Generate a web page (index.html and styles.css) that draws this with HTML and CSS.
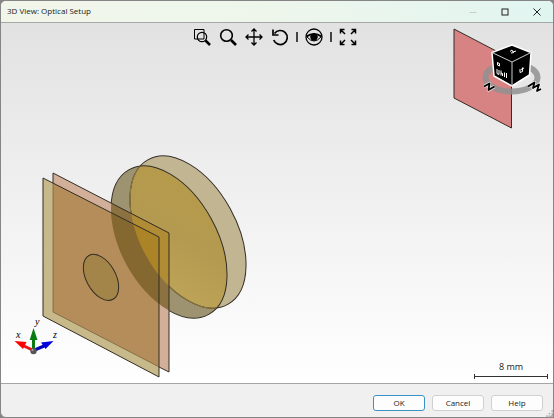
FILE: index.html
```html
<!DOCTYPE html>
<html lang="en">
<head>
<meta charset="utf-8">
<title>3D View: Optical Setup</title>
<link rel="stylesheet" href="styles.css">
</head>
<body>
<div class="window">
  <header class="titlebar">
    <h1 class="title">3D View: Optical Setup</h1>
    <div class="controls">
      <button class="control" type="button" aria-label="Minimize" disabled><svg viewBox="0 0 10 10"><path d="M1.500 5.500h7" stroke="#c3d0cc"/></svg></button>
      <button class="control" type="button" aria-label="Maximize"><svg viewBox="0 0 10 10"><rect x="2" y="2" width="6" height="6"/></svg></button>
      <button class="control" type="button" aria-label="Close"><svg viewBox="0 0 10 10"><path d="M1.500 1.500l7 7M8.500 1.500l-7 7"/></svg></button>
    </div>
  </header>

  <main class="viewport">
    <svg class="scene" viewBox="1 23 552 360" role="img" aria-label="Optical setup">
      <defs>
        <clipPath id="front-disc"><ellipse rx="82.600" ry="48.200" transform="translate(169 242) rotate(61.200)"/></clipPath>
        <clipPath id="pink-plane"><path d="M53 173L169 233V372L53 312z"/></clipPath>
        <clipPath id="olive-plane"><path d="M43 178L159 237V377L43 316z"/></clipPath>
        <linearGradient id="glass" x1="0" y1="0" x2="1" y2="1">
          <stop offset="0" stop-color="#b99b48"/><stop offset=".55" stop-color="#b39a50"/><stop offset="1" stop-color="#c1a75a"/>
        </linearGradient>
      </defs>

      <g class="edge">
        <path d="M454 29L511.500 59V128L454 98z" fill="#d78283"/>
      </g>

      <g>
        <ellipse rx="82.600" ry="48.200" transform="translate(188 232) rotate(61.200)" fill="#c2b592"/>
        <ellipse rx="82.600" ry="48.200" transform="translate(169 242) rotate(61.200)" fill="#9d9370"/>
        <g clip-path="url(#front-disc)"><ellipse rx="82.600" ry="48.200" transform="translate(188 232) rotate(61.200)" fill="url(#glass)"/></g>
        <g class="edge">
          <ellipse rx="82.600" ry="48.200" transform="translate(188 232) rotate(61.200)"/>
          <ellipse rx="82.600" ry="48.200" transform="translate(169 242) rotate(61.200)"/>
        </g>
        <g clip-path="url(#front-disc)"><ellipse class="hidden-edge" rx="82.600" ry="48.200" transform="translate(188 232) rotate(61.200)"/></g>
      </g>

      <path d="M53 173L169 233V372L53 312z" fill="#d2af98"/>
      <g clip-path="url(#pink-plane)">
        <ellipse rx="82.600" ry="48.200" transform="translate(169 242) rotate(61.200)" fill="#8c7240"/>
        <g clip-path="url(#front-disc)"><ellipse rx="82.600" ry="48.200" transform="translate(188 232) rotate(61.200)" fill="#b08c35"/></g>
      </g>
      <path d="M43 178L159 237V377L43 316z" fill="#c8b98a"/>
      <g clip-path="url(#olive-plane)">
        <path d="M53 173L169 233V372L53 312z" fill="#b58d5b"/>
        <g clip-path="url(#pink-plane)">
          <ellipse rx="82.600" ry="48.200" transform="translate(169 242) rotate(61.200)" fill="#846830"/>
          <g clip-path="url(#front-disc)"><ellipse rx="82.600" ry="48.200" transform="translate(188 232) rotate(61.200)" fill="#ac8428"/></g>
        </g>
        <path d="M53 173V312L169 372" fill="none" stroke="#75623c" stroke-width=".8"/>
      </g>
      <g class="edge">
        <path d="M53 183V173L169 233V372L159 367"/>
        <path d="M43 178L159 237V377L43 316z"/>
        <ellipse rx="25" ry="14.700" transform="translate(101 277.400) rotate(61.200)" fill="#a3854a"/>
      </g>

      <g class="axes">
        <path d="M33.500 350.500L24 346" stroke="#e11" stroke-width="3"/><path d="M14.500 341L26.500 342L23 349z" fill="#f00"/>
        <path d="M33.500 350.500L44 346" stroke="#00b" stroke-width="3"/><path d="M53.500 341L41 342.500L45.500 349z" fill="#00d"/>
        <path d="M33.500 350V338" stroke="#087a10" stroke-width="3"/><path d="M33.500 328L29.700 340H37.500z" fill="#087a10"/>
        <circle cx="33.500" cy="351" r="3.200" fill="#555"/><circle cx="32.500" cy="350" r="1" fill="#aaa"/>
        <text x="16" y="338">x</text><text x="35" y="325">y</text><text x="53" y="338">z</text>
      </g>

      <g class="cube">
        <ellipse cx="511.500" cy="77.500" rx="26" ry="14" fill="none" stroke="#919191" stroke-opacity=".85" stroke-width="6"/>
        <path d="M512 45L531 52.500L529.500 75L512 86L494 76L492 52.500z" fill="#000" stroke="#fff" stroke-width="1.500" stroke-linejoin="round"/>
        <path d="M492 52.500L512 62L531 52.500M512 62V86" fill="none" stroke="#ccc" stroke-width="1"/>
        <path d="M510 51.500l2-1.500l1 2l3-1M511 53l3-.5" fill="none" stroke="#fff" stroke-width="1"/>
        <path d="M497 62.500l2.500 1v2.500M497.500 63v2l2 1M497 69v4.500l2 1v-4.500M501 70.500v5M501 73l1.500 .5v2.500M504.500 72.500v4.500M506.500 73v5M520 69v3.500l2.500-1v-4M521 69.500l3-1.500" fill="none" stroke="#fff" stroke-width="1"/>
        <g fill="none" stroke-linejoin="round">
          <path d="M484 86.500L489.500 83.500L488.500 90L494.500 86.500" stroke="#fff" stroke-opacity=".7" stroke-width="3.500"/>
          <path d="M484 86.500L489.500 83.500L488.500 90L494.500 86.500" stroke="#000" stroke-width="1.800"/>
          <path d="M528 86.500L534.500 82.500L533 88L539 84.500L537 91L541 89" stroke="#fff" stroke-opacity=".7" stroke-width="3.500"/>
          <path d="M528 86.500L534.500 82.500L533 88L539 84.500L537 91L541 89" stroke="#000" stroke-width="1.800"/>
        </g>
      </g>
    </svg>

    <div class="toolbar" role="toolbar" aria-label="View tools">
      <button class="tool" type="button" aria-label="Zoom to area"><svg viewBox="0 0 20 20"><path d="M12 2.500H2.500V12H12z" stroke-width="1"/><circle cx="10" cy="10" r="4.700" stroke-width="1.200"/><path d="M13.500 13.500L18 18" stroke-width="2.500"/></svg></button>
      <button class="tool" type="button" aria-label="Zoom"><svg viewBox="0 0 20 20"><circle cx="8.500" cy="8.500" r="5.800" stroke-width="1.600"/><path d="M13 13L18 18" stroke-width="2.700"/></svg></button>
      <button class="tool" type="button" aria-label="Pan"><svg viewBox="0 0 20 20"><path d="M10 2V18M2 10H18M7.500 4.500L10 2L12.500 4.500M7.500 15.500L10 18L12.500 15.500M4.500 7.500L2 10L4.500 12.500M15.500 7.500L18 10L15.500 12.500" stroke-width="1.300"/></svg></button>
      <button class="tool" type="button" aria-label="Rotate"><svg viewBox="0 0 20 20"><path d="M4.500 6.500A7 7 0 1 1 3.700 13" stroke-width="1.700"/><path d="M3 2.500V8H8.500" stroke-width="1.700"/></svg></button>
      <span class="divider"></span>
      <button class="tool" type="button" aria-label="View options"><svg viewBox="0 0 20 20"><circle cx="10" cy="10" r="8" stroke-width="1.300"/><path d="M2.500 9.500Q10 4.500 17.500 9.500" stroke-width="2"/><path d="M3 10Q10 18 17 10" stroke-width="1"/><circle cx="10" cy="10" r="3.300" fill="#000"/></svg></button>
      <span class="divider"></span>
      <button class="tool" type="button" aria-label="Fit to window"><svg viewBox="0 0 20 20"><path d="M2.500 6.500V2.500H6.500M2.500 2.500L7 7M13.500 2.500H17.500V6.500M17.500 2.500L13 7M2.500 13.500V17.500H6.500M2.500 17.500L7 13M13.500 17.500H17.500V13.500M17.500 17.500L13 13" stroke-width="1.500"/></svg></button>
    </div>

    <div class="scale">
      <span>8 mm</span>
      <span class="ruler"></span>
    </div>
  </main>

  <footer class="footer">
    <button class="button primary" type="button">OK</button>
    <button class="button" type="button">Cancel</button>
    <button class="button" type="button">Help</button>
    <svg class="grip" viewBox="0 0 8 8"><path d="M6 0h2v2H6zM3 3h2v2H3zM6 3h2v2H6zM0 6h2v2H0zM3 6h2v2H3zM6 6h2v2H6z"/></svg>
  </footer>
</div>
</body>
</html>
```
FILE: styles.css
```css
* {
  box-sizing: border-box;
}

body {
  margin: 0;
  background: #858585;
  color: #222;
  font-family: "Open Sans", "Noto Sans", sans-serif;
}

button {
  padding: 0;
  border: 0;
  background: none;
  color: inherit;
  font: inherit;
}

.window {
  display: flex;
  flex-direction: column;
  height: 100vh;
  border: 1px solid #858585;
  border-radius: 6px;
  overflow: hidden;
  background: #f0f0f0;
}

.titlebar {
  display: flex;
  justify-content: space-between;
  flex: none;
  height: 22px;
  padding-left: 6px;
  border-bottom: 1px solid #a5a9a5;
  background: linear-gradient(90deg, #f1f6ea, #eef6ec 50%, #e1f5f0);
}

.title {
  margin: 0;
  font-size: 8px;
  font-weight: 400;
  line-height: 20px;
}

.controls {
  display: flex;
}

.control {
  display: grid;
  place-items: center;
  width: 32px;
}

.control svg {
  width: 10px;
  height: 10px;
  fill: none;
  stroke: #222;
}

.viewport {
  display: grid;
  flex: 1;
  min-height: 0;
  background: linear-gradient(#e2e2e2, #fff);
}

.viewport > * {
  grid-area: 1 / 1;
  min-height: 0;
}

.scene {
  width: 100%;
  height: 100%;
}

.edge {
  fill: none;
  stroke: #332d24;
  stroke-width: 1;
}

.hidden-edge {
  fill: none;
  stroke: #8e793f;
  stroke-width: 1;
}

.axes {
  font: italic 10px "Liberation Serif", serif;
}

.toolbar {
  display: flex;
  align-items: center;
  align-self: start;
  justify-self: center;
  gap: 6px;
  padding: 4px 4px 0 0;
}

.tool {
  display: grid;
  width: 20px;
  height: 20px;
}

.tool svg {
  width: 20px;
  height: 20px;
  fill: none;
  stroke: #000;
}

.divider {
  width: 2px;
  height: 10px;
  background: #444;
}

.scale {
  display: flex;
  flex-direction: column;
  place-self: end;
  width: 74px;
  margin: 0 5px 4px 0;
  font-size: 9px;
  line-height: 14px;
  text-align: center;
}

.ruler {
  height: 5px;
  border: solid #333;
  border-width: 0 1px;
  background: linear-gradient(#333, #333) center / 100% 1px no-repeat;
}

.footer {
  display: flex;
  align-items: center;
  justify-content: flex-end;
  flex: none;
  gap: 7px;
  height: 34px;
  padding: 4px 10px 0 0;
  border-top: 1px solid #a5a5a5;
}

.button {
  width: 52px;
  height: 16px;
  border: 1px solid #d0d0d0;
  border-radius: 3px;
  background: #fdfdfd;
  font-size: 8px;
  line-height: 14px;
}

.primary {
  border-color: #3c91c4;
}

.grip {
  position: absolute;
  right: 1px;
  bottom: 1px;
  width: 7px;
  height: 7px;
  fill: #b8b8b8;
}
```
